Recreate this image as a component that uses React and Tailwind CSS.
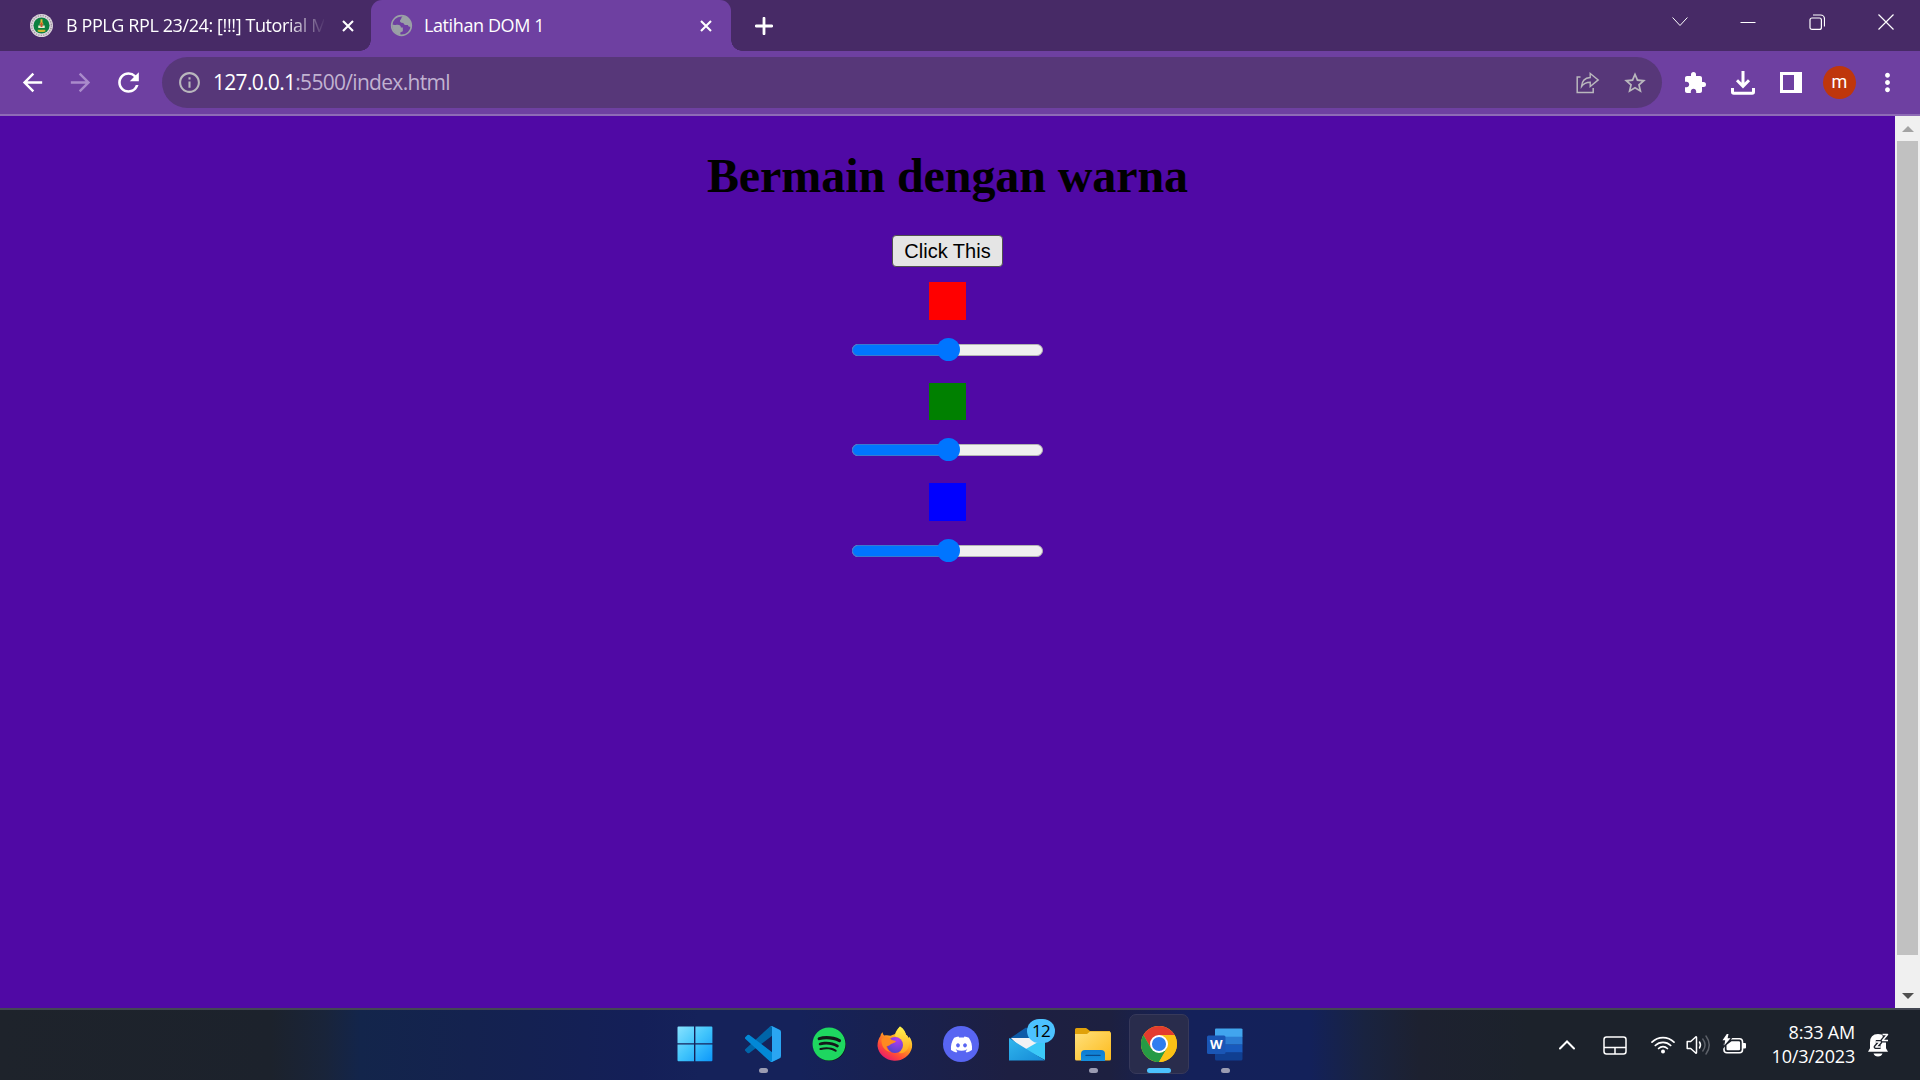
import React from "react";
import { FaSpotify, FaDiscord } from "react-icons/fa";
import { MdExtension, MdRefresh, MdArrowBack, MdArrowForward, MdInfoOutline, MdStarOutline, MdMoreVert } from "react-icons/md";

const UI = "font-['Open_Sans','Noto_Sans',sans-serif]";

function SchoolCrest() {
  return (
    <svg viewBox="0 0 24 24" className="size-[23px] shrink-0">
      <circle cx="12" cy="12" r="12" fill="#dcd5dc" />
      <circle cx="12" cy="12" r="10.3" fill="none" stroke="#9f949f" strokeWidth="1.4" strokeDasharray="1.3 1.3" />
      <circle cx="12" cy="12" r="8.4" fill="#0b8040" />
      <path d="M11 5.500h2v3.200l1.400 2.300h-4.800L11 8.700z" fill="#e8b53a" />
      <path d="M8.600 12h6.800v2.600H8.600z" fill="#e9ead2" />
      <path d="M11 9h2v4.500h-2z" fill="#c9552a" />
      <path d="M8 16.500h8v1.700q-4 1.200-8 0z" fill="#d0b52f" />
    </svg>
  );
}

function Globe() {
  return (
    <svg viewBox="0 0 24 24" className="size-[23px] shrink-0">
      <circle cx="12" cy="12" r="10.300" fill="none" stroke="#9aa0a6" strokeWidth="1.600" />
      <path d="M2 11q2.500 .8 5 .2c2.800-.4 4.300.8 4.400 2.800h2v4l-2.600 1.400V22Q3 21 2 11zM13 2.500c-1.500 1-1 2.500-2 3.500s-1 2.500 1 3l2 .3c.5 2 2.500 2.500 4.500 2.200l1 1.500 2.500.5C22.500 6 18 2 13 2.500z" fill="#9aa0a6" />
    </svg>
  );
}

function CloseX() {
  return (
    <svg viewBox="0 0 12 12" className="ml-[18px] size-3 shrink-0" fill="none" stroke="white" strokeWidth="2.100"><path d="M1 1l10 10M11 1L1 11" /></svg>
  );
}

function TabStrip() {
  return (
    <div className="flex h-[51px] bg-[#472a66] text-white">
      <div className="flex w-[371px] items-center pl-[30px]">
        <SchoolCrest />
        <span className="ml-[13px] w-[258px] overflow-hidden whitespace-nowrap text-[18px] tracking-[-0.4px] [mask-image:linear-gradient(to_right,black_220px,transparent_260px)]">
          B PPLG RPL 23/24: [!!!] Tutorial M
        </span>
        <CloseX />
      </div>
      <div className="relative flex w-[360px] items-center rounded-t-[11px] bg-[#6e40a1] pl-[19px]">
        <div className="absolute bottom-0 -left-[11px] size-[11px] bg-[radial-gradient(circle_at_0_0,#472a66_10.5px,#6e40a1_11px)]" />
        <div className="absolute -right-[11px] bottom-0 size-[11px] bg-[radial-gradient(circle_at_100%_0,#472a66_10.5px,#6e40a1_11px)]" />
        <Globe />
        <span className="ml-[11px] w-[258px] text-[18px] tracking-[-0.4px]">Latihan DOM 1</span>
        <CloseX />
      </div>
      <div className="flex w-[65px] items-center justify-center">
        <svg viewBox="0 0 18 18" className="size-[18px]" stroke="white" strokeWidth="2.800" strokeLinecap="round"><path d="M9 1.200v15.600M1.200 9h15.600" /></svg>
      </div>
      <div className="ml-auto flex h-[43px] items-center">
        <svg viewBox="0 0 16 16" className="mr-[52px] size-4" fill="none" stroke="white" strokeWidth="1"><path d="M.6 3.500L8 11.500l7.400-8" /></svg>
        <svg viewBox="0 0 16 16" className="mr-[53px] size-4" stroke="white" strokeWidth="1"><path d="M.5 8.500h15" /></svg>
        <svg viewBox="0 0 16 16" className="mr-[53px] size-4" fill="none" stroke="white" strokeWidth="1.200"><rect x="1" y="4" width="11.400" height="11.400" rx="2" /><path d="M4 1h7.500a4 4 0 0 1 4 4v7.500" /></svg>
        <svg viewBox="0 0 16 16" className="mr-[26px] size-4" stroke="white" strokeWidth="1.200"><path d="M.5 .5l15 15M15.500 .5l-15 15" /></svg>
      </div>
    </div>
  );
}

function Toolbar() {
  return (
    <div className="flex h-[65px] items-start border-b-2 border-[#8e6bb6] bg-[#6e40a1] pt-[6px] text-white">
      <div className="flex h-[51px] w-[162px] items-center pl-[18px]">
        <MdArrowBack className="size-[29px]" />
        <MdArrowForward className="ml-[19px] size-[29px] text-[#aa8bcb]" />
        <MdRefresh className="ml-[18px] size-[31px]" />
      </div>
      <div className="flex h-[51px] w-[1500px] items-center rounded-full bg-[#573779] pl-[15px] text-[#b9b7bd]">
        <MdInfoOutline className="size-[25px]" />
        <span className="ml-[11px] text-[21px] tracking-[-0.700px] text-[#c1b2d1]">
          <span className="text-white">127.0.0.1</span>:5500/index.html
        </span>
        <svg viewBox="0 0 24 22" className="ml-auto h-[22px] w-6" fill="none" stroke="currentColor" strokeWidth="1.500"><path d="M4.500 5H1.200v15.600h16V16" /><path d="M14.200 1.500v4C8 6 5.800 9.500 5.500 14.500c2-3 4.500-4.300 8.700-4.300v4.300l8-6.600z" strokeWidth="1.400" /></svg>
        <MdStarOutline className="mr-[14px] ml-[22px] size-[26px]" />
      </div>
      <div className="flex h-[51px] flex-1 items-center pl-[21px]">
        <MdExtension className="size-[24px]" />
        <svg viewBox="0 0 24 24" className="ml-[24px] size-6" fill="none" stroke="white" strokeWidth="3"><path d="M12 0v14M6 9.300l6 6 6-6M1.500 17v4q0 1.300 1.300 1.300h18.400q1.300 0 1.300-1.300v-4" /></svg>
        <svg viewBox="0 0 22 21" className="ml-[25px] h-[21px] w-[22px]"><path fillRule="evenodd" d="M0 0h22v21H0zM3 3v15h11V3z" fill="white" /></svg>
        <div className="ml-[21px] flex size-[33px] items-center justify-center rounded-full bg-[#bf360c] pb-[2px] font-[Roboto,sans-serif] text-[18px]">m</div>
        <MdMoreVert className="ml-[17px] size-[29px]" />
      </div>
    </div>
  );
}

function Slider() {
  return (
    <div className="relative flex h-6 w-[191px] items-center">
      <div className="h-3 w-full rounded-full border border-[#b2b2b2] bg-[#efefef]" />
      <div className="absolute left-0 h-3 w-24 rounded-l-full border border-r-0 border-[#3a78d0] bg-[#0075ff]" />
      <div className="absolute top-0 left-[84.500px] size-[23px] rounded-full bg-[#0075ff]" />
    </div>
  );
}

function Page() {
  return (
    <div className="flex h-[892px]">
      <main className="flex w-[1895px] flex-col items-center bg-[#5009a5]">
        <h1 className="mt-[32px] font-['Liberation_Serif',serif] text-[48px] leading-[55px] font-bold tracking-[-0.080px] text-black">Bermain dengan warna</h1>
        <button className="mt-8 h-8 w-[111px] rounded-[4px] border-[1.500px] border-[#505050] bg-[#e5e5e5] font-['Liberation_Sans',sans-serif] text-[20px] leading-none whitespace-nowrap text-black">Click This</button>
        <div className="mt-[15px] h-[38px] w-[37px] bg-[#ff0000]" />
        <div className="mt-[18px]"><Slider /></div>
        <div className="mt-[21px] h-[37px] w-[37px] bg-[#008000]" />
        <div className="mt-[18px]"><Slider /></div>
        <div className="mt-[21px] h-[38px] w-[37px] bg-[#0000ff]" />
        <div className="mt-[18px]"><Slider /></div>
      </main>
      <div className="flex w-[25px] flex-col items-center bg-[#f0f0f0]">
        <svg viewBox="0 0 12 6" className="mt-[10px] h-[6px] w-3"><path d="M0 6L6 0l6 6z" fill="#a3a3a3" /></svg>
        <div className="mt-[9px] h-[814px] w-[21px] bg-[#c1c1c1]" />
        <svg viewBox="0 0 12 6" className="mt-[38px] h-[6px] w-3"><path d="M0 0l6 6 6-6z" fill="#505050" /></svg>
      </div>
    </div>
  );
}

function Windows() {
  return (
    <svg viewBox="0 0 36 36" className="size-9">
      <defs><linearGradient id="win" gradientUnits="userSpaceOnUse" x1="0" y1="0" x2="36" y2="36"><stop stopColor="#8ae3ff" /><stop offset=".5" stopColor="#40c4fc" /><stop offset="1" stopColor="#0a95fa" /></linearGradient></defs>
      <g fill="url(#win)"><path d="M1.500.5H17v16.700H.5V1.500q0-1 1-1zM18.400.5h16q1 0 1 1v15.700h-17zM.5 18.600H17v16.600H1.500q-1 0-1-1zM18.400 18.600h17v15.600q0 1-1 1h-16z" /></g>
    </svg>
  );
}

function VSCode() {
  return (
    <svg viewBox="0 0 100 100" className="size-9">
      <path d="M96.500 10.700L75.900.8a6.200 6.200 0 0 0-7.100 1.200L1.300 63.600a4.200 4.200 0 0 0 0 6.100l5.500 5a4.200 4.200 0 0 0 5.300.3l81.300-61.700c2.700-2 6.600-.1 6.600 3.300v-.3a6.300 6.300 0 0 0-3.500-5.600z" fill="#0065a9" />
      <path d="M96.500 89.300l-20.600 9.900a6.200 6.200 0 0 1-7.100-1.200L1.300 36.400a4.200 4.200 0 0 1 0-6.100l5.500-5a4.200 4.200 0 0 1 5.300-.3l81.300 61.700c2.700 2 6.600.1 6.600-3.300v.3a6.300 6.300 0 0 1-3.500 5.600z" fill="#0288d6" />
      <path d="M75.900 99.100a6.200 6.200 0 0 1-7.100-1.200c2.300 2.300 6.200.7 6.200-2.600V4.700c0-3.300-3.900-4.900-6.200-2.600A6.200 6.200 0 0 1 75.900.9l20.600 9.900a6.300 6.300 0 0 1 3.500 5.600v67.200a6.300 6.300 0 0 1-3.500 5.600z" fill="#2aa5f2" />
    </svg>
  );
}

function Spotify() {
  return (
    <div className="flex size-[34px] items-center justify-center rounded-full">
      <div className="flex size-[33px] items-center justify-center rounded-full bg-[#14181a]">
        <FaSpotify className="size-[34px] shrink-0 text-[#1ed760]" />
      </div>
    </div>
  );
}

function Firefox() {
  return (
    <svg viewBox="0 0 36 37" className="h-[37px] w-9">
      <defs>
        <linearGradient id="ffBody" x1=".8" y1=".1" x2=".2" y2="1"><stop stopColor="#fff14a" /><stop offset=".35" stopColor="#ffa61e" /><stop offset=".7" stopColor="#ff4a38" /><stop offset="1" stopColor="#e0107a" /></linearGradient>
        <radialGradient id="ffGlobe" cx=".65" cy=".15" r=".9"><stop stopColor="#b33cf3" /><stop offset="1" stopColor="#5144c8" /></radialGradient>
        <linearGradient id="ffFlame" x1="0" y1="0" x2="0" y2="1"><stop stopColor="#fff44f" /><stop offset="1" stopColor="#ffa51f" /></linearGradient>
      </defs>
      <path d="M23 .5c4 2.700 5.500 6 6 8.300 1.300.4 2.200 1.800 2.600 3.200.4-.4.5-.9.4-1.500C34.600 13.500 35.600 17 35 21.500A17.500 16.800 0 0 1 .5 20c0-4 1-7.500 3-10C3.600 8.500 4.500 7 5.800 6.300 5.700 8 6.500 9 7.200 9.600c2-.7 4.200-.5 6.300.1L18 8c1-3.300 3-5.500 5-7.500z" fill="url(#ffBody)" />
      <path d="M23 .5c4 2.700 5.500 6 6 8.300 3.300 4.200 4.200 9.200 2 13.700-2 4-6 5.500-9 4.500 4-4 4.500-10.500.5-14.500-1.500-1.500-3.700-2-4.500-2.500.8-4 3-7 5-9.500z" fill="url(#ffFlame)" />
      <circle cx="18" cy="19" r="8" fill="url(#ffGlobe)" />
      <path d="M4.500 13c4-3 8-1.500 10 .8 1.600.7 3.500.7 4.500 1.500-.5 1.500-4.500 2.200-5.500 3.200-1 1.300-2.700 1.500-4.200 1.500.3 3 2.500 5 4.500 6C7.500 25 4 20 4.500 13z" fill="#ff8a21" />
    </svg>
  );
}

function Discord() {
  return (
    <div className="flex size-9 items-center justify-center rounded-full bg-[#5865f2]">
      <FaDiscord className="size-[23px] text-white" />
    </div>
  );
}

function Mail() {
  return (
    <div className="relative h-[34px] w-9">
      <svg viewBox="0 0 36 34" className="h-[34px] w-9">
        <defs><linearGradient id="mail" x1="0" y1="0" x2="1" y2="1"><stop stopColor="#31b7ee" /><stop offset="1" stopColor="#1589d6" /></linearGradient></defs>
        <path d="M0 12L17 .5 36 12v6H0z" fill="#0e5ba8" />
        <path d="M2 11h31v12l-15 4z" fill="#f2f2f4" />
        <path d="M36 11v22L16 22.500z" fill="#3bc9f8" />
        <path d="M0 11l36 22.500H0z" fill="url(#mail)" />
      </svg>
      <div className="absolute -top-[8px] left-[18px] flex h-[24px] w-[28px] items-center justify-center rounded-full bg-[#4cc2ff] text-[17px] tracking-[-0.800px] text-black">12</div>
    </div>
  );
}

function Explorer() {
  return (
    <svg viewBox="0 0 36 33" className="h-[33px] w-9">
      <defs>
        <linearGradient id="folder" x1="0" y1="0" x2="1" y2="1"><stop stopColor="#ffe07c" /><stop offset="1" stopColor="#fdbb1c" /></linearGradient>
        <linearGradient id="folderBlue" x1="0" y1="0" x2="0" y2="1"><stop stopColor="#0e7bd2" /><stop offset="1" stopColor="#1690dd" /></linearGradient>
      </defs>
      <path d="M1.500 0h9q1 0 2 1l2.500 2H35v6H0V1.500Q0 0 1.500 0z" fill="#e0a10a" />
      <path d="M0 6h12l3-2.500h19q2 0 2 2V31q0 1.500-1.500 1.500h-33Q0 32.500 0 31z" fill="url(#folder)" />
      <path d="M6 33v-7q0-4 4-4h16q4 0 4 4v7z" fill="url(#folderBlue)" />
      <path d="M11 27.400h14" stroke="#0a4a8c" strokeWidth="1.300" strokeLinecap="round" />
    </svg>
  );
}

function Chrome() {
  return (
    <svg viewBox="0 0 48 48" className="size-9">
      <circle cx="24" cy="24" r="24" fill="#fbc116" />
      <path d="M3.220 12A24 24 0 0 1 44.780 12H24L13.600 30z" fill="#e33b2e" />
      <path d="M3.220 12A24 24 0 0 0 24 48L34.400 30H13.600z" fill="#269a45" />
      <path d="M24 12h20.780A24 24 0 0 1 24 48l10.400-18z" fill="#fbc116" />
      <circle cx="24" cy="24" r="12" fill="#fff" />
      <circle cx="24" cy="24" r="9.400" fill="#2f7def" />
    </svg>
  );
}

function Word() {
  return (
    <svg viewBox="0 0 36 33" className="h-[33px] w-9">
      <path d="M8 1.500Q8 .5 9 .5h25q1.500 0 1.500 1V9H8z" fill="#41a5ee" />
      <path d="M8 8.700h27.500v8H8z" fill="#2b7cd3" />
      <path d="M8 16.700h27.500v8H8z" fill="#185abd" />
      <path d="M8 24.600h27.500V31q0 1.500-1.500 1.500H9.500Q8 32.500 8 31z" fill="#103f91" />
      <rect x="0" y="7.500" width="18.500" height="18.500" rx="1.500" fill="#1a56b5" />
      <text x="9.200" y="21.300" textAnchor="middle" fontFamily="Open Sans, sans-serif" fontWeight="700" fontSize="13" fill="#fff">W</text>
    </svg>
  );
}

function TaskItem({ children, running, active }) {
  return (
    <div className={active ? "relative flex h-[60px] w-[60px] items-center justify-center rounded-[7px] border border-[#37395a] bg-[#292c4c]" : "relative flex h-[60px] w-[60px] items-center justify-center"}>
      {children}
      {running && <div className="absolute bottom-[1px] h-[5px] w-[9px] rounded-full bg-[#9b9cb2]" />}
      {active && <div className="absolute bottom-0 h-[5px] w-6 rounded-full bg-[#4cc2ff]" />}
    </div>
  );
}

function Tray() {
  return (
    <div className="flex h-[70px] w-[361px] items-center text-white">
      <svg viewBox="0 0 16 10" className="h-[10px] w-4 shrink-0" fill="none" stroke="white" strokeWidth="2" strokeLinecap="round"><path d="M1 8.500L8 1.500l7 7" /></svg>
      <svg viewBox="0 0 24 19" className="ml-7 h-[19px] w-6 shrink-0" fill="none" stroke="white" strokeWidth="1.500"><rect x="1" y="1" width="22" height="17" rx="2.500" /><path d="M1 11.500h22M12 11.500V18" /></svg>
      <svg viewBox="0 0 24 18" className="ml-6 h-[18px] w-6 shrink-0" fill="none" stroke="white" strokeWidth="1.700" strokeLinecap="round"><path d="M1 6.200a15.500 15.500 0 0 1 22 0M4.300 9.500a11 11 0 0 1 15.400 0M7.600 12.500a6.300 6.300 0 0 1 8.800 0" /><circle cx="12" cy="15.500" r="2" fill="white" stroke="none" /></svg>
      <svg viewBox="0 0 25 22" className="ml-[11px] h-[22px] w-[25px] shrink-0" fill="none" stroke="white" strokeWidth="1.500" strokeLinecap="round"><path d="M1.200 7.500h3.500l5-4.500q.8-.5.8.5v15q0 1-.8.5l-5-4.500H1.200z" strokeLinejoin="round" /><path d="M13.500 8q2 3 0 6" /><path d="M16.800 5q4.500 6 0 12M20 2q6.500 9 0 18" stroke="#5c6068" /></svg>
      <svg viewBox="0 0 25 20" className="mb-[3px] ml-[11px] h-5 w-[25px] shrink-0"><path d="M9 4.800h8.500q3 0 3 3v8q0 3-3 3H5q-3 0-3-3v-6" fill="none" stroke="white" strokeWidth="1.600" /><path d="M21 9h2q1 0 1 1v3.500q0 1-1 1h-2zM9.500 7.200h7.300q1.300 0 1.300 1.300v6.500q0 1.300-1.300 1.300H5.800q-1.300 0-1.300-1.300v-4z" fill="white" /><path d="M4.800 0L.5 6.300h2.700L2.300 11.500 8.500 4.300H5.600L6.500 0z" fill="white" stroke="#1d222c" strokeWidth="2.400" paintOrder="stroke" /></svg>
      <div className="ml-auto pb-[3px] text-right text-[18px] leading-6 tracking-[-0.200px] whitespace-nowrap"><div>8:33 AM</div><div>10/3/2023</div></div>
      <svg viewBox="0 0 21 24" className="mr-[31px] ml-[13px] h-6 w-[21px] shrink-0"><path d="M0 18.800l2-3.500V9.500Q2 1 10 1t8 8.500v5.800l2 3.500zM5.500 20.500h9q-1 3-4.500 3t-4.500-3z" fill="white" /><g fill="none" strokeLinejoin="round"><path d="M14.500 1.500h5l-5 6h5.500M7.800 9h4.400l-4.400 5h4.800" stroke="#1d222c" strokeWidth="4.200" /><path d="M14.500 1.500h5l-5 6h5.500M7.800 9h4.400l-4.400 5h4.800" stroke="white" strokeWidth="1.500" /></g></svg>
    </div>
  );
}

function Taskbar() {
  return (
    <div className="flex h-[72px] border-t-2 border-[#434753] bg-[linear-gradient(to_right,#1e232b_0px,#1c222c_270px,#19243a_325px,#13254b_360px,#14224f_470px,#141f58_640px,#15225a_700px,#15225a_800px,#1d1f42_1010px,#1d2040_1110px,#14215a_1190px,#13215a_1310px,#192340_1365px,#1d2130_1420px,#1c222b_1530px)]">
      <div className="flex w-[1559px] gap-[6px] pt-1 pl-[665px]">
        <div className="mr-[2px]"><TaskItem><Windows /></TaskItem></div>
        <TaskItem running><VSCode /></TaskItem>
        <TaskItem><Spotify /></TaskItem>
        <TaskItem><Firefox /></TaskItem>
        <TaskItem><Discord /></TaskItem>
        <TaskItem><Mail /></TaskItem>
        <TaskItem running><Explorer /></TaskItem>
        <TaskItem active><Chrome /></TaskItem>
        <TaskItem running><Word /></TaskItem>
      </div>
      <Tray />
    </div>
  );
}

export default function App() {
  return (
    <div className={`h-[1080px] w-[1920px] overflow-hidden ${UI}`}>
      <TabStrip />
      <Toolbar />
      <Page />
      <Taskbar />
    </div>
  );
}
